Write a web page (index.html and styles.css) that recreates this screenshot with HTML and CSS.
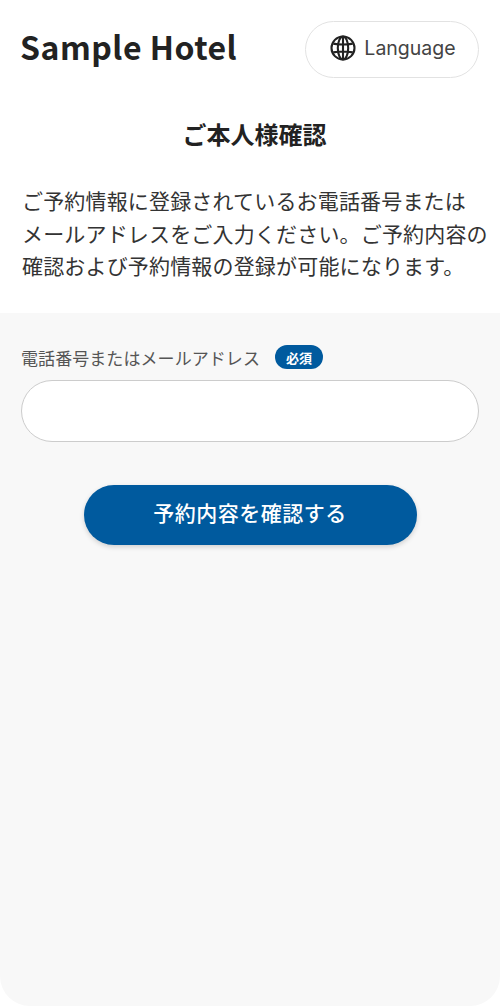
FILE: index.html
```html
<!DOCTYPE html>
<html lang="ja">
<head>
<meta charset="utf-8">
<title>ご本人様確認</title>
<link rel="stylesheet" href="styles.css">
</head>
<body>
<div class="page">
  <header class="header">
    <div class="logo">Sample Hotel</div>
    <button class="lang" type="button">
      <svg class="globe" viewBox="0 0 26 26" width="26" height="26" fill="none" stroke="#222" stroke-width="2.1">
        <circle cx="13" cy="13" r="11.5"/>
        <ellipse cx="13" cy="13" rx="5.2" ry="11.5"/>
        <path d="M3.2 8.6Q13 10.4 22.8 8.6M3.2 17.4Q13 15.6 22.8 17.4M13 1.5V24.5"/>
      </svg>
      <span>Language</span>
    </button>
  </header>
  <section class="intro">
    <h1 class="title">ご本人様確認</h1>
    <p class="lead">ご予約情報に登録されているお電話番号または<br>メールアドレスをご入力ください。ご予約内容の<br>確認および予約情報の登録が可能になります。</p>
  </section>
  <section class="form">
    <div class="label-row">
      <label class="label" for="contact">電話番号またはメールアドレス</label>
      <span class="badge">必須</span>
    </div>
    <input class="input" id="contact" type="text">
    <button class="submit" type="button">予約内容を確認する</button>
  </section>
</div>
</body>
</html>
```
FILE: styles.css
```css
* { box-sizing: border-box; }
html, body { margin: 0; padding: 0; background: #fff; }
body { font-family: "Noto Sans CJK JP", "Noto Sans", sans-serif; }
.page {
  width: 500px;
  height: 1006px;
  display: flex;
  flex-direction: column;
  border-radius: 30px;
  overflow: hidden;
  background: #fff;
}
.header {
  display: flex;
  justify-content: space-between;
  align-items: flex-start;
  padding: 21px 21px 0 20px;
}
.logo {
  font-size: 32px;
  font-weight: 700;
  line-height: 50px;
  color: #222;
  letter-spacing: 0.5px;
}
.lang {
  width: 174px;
  height: 57px;
  display: flex;
  align-items: center;
  justify-content: center;
  gap: 8px;
  background: #fff;
  border: 1.5px solid #e2e2e2;
  border-radius: 29px;
  font-family: "Inter", sans-serif;
  font-size: 19.5px;
  line-height: 24px;
  color: #444;
  padding: 0 0 3px 2px;
}
.intro { padding: 0 13px 0 22px; }
.title {
  margin: 38px 0 0;
  text-align: center;
  font-size: 24px;
  line-height: 36px;
  font-weight: 700;
  color: #222;
}
.lead {
  margin: 32px 0 0;
  font-size: 21px;
  line-height: 32.5px;
  letter-spacing: 0.17px;
  color: #333;
  white-space: nowrap;
}
.form {
  flex: 1;
  margin-top: 31.5px;
  background: #f8f8f8;
  padding: 31px 21px 0;
  display: flex;
  flex-direction: column;
}
.label-row {
  display: flex;
  align-items: center;
  gap: 15px;
  height: 26px;
}
.label { font-size: 17px; color: #555; letter-spacing: 0.07px; }
.badge {
  width: 48px;
  height: 24px;
  border-radius: 12px;
  background: #005a9e;
  color: #fff;
  font-size: 13px;
  font-weight: 700;
  display: flex;
  align-items: center;
  justify-content: center;
}
.input {
  margin-top: 10px;
  width: 458px;
  height: 62px;
  border: 1.5px solid #ccc;
  border-radius: 31px;
  background: #fff;
  outline: none;
}
.submit {
  align-self: center;
  margin-top: 43px;
  width: 333px;
  height: 60px;
  border: 0;
  border-radius: 30px;
  background: #005a9e;
  color: #fff;
  font-family: inherit;
  font-size: 21px;
  font-weight: 500;
  line-height: 54px;
  padding: 0 0 6px;
  letter-spacing: 0.5px;
  box-shadow: 0 2px 5px rgba(0, 0, 0, 0.16);
}
```
